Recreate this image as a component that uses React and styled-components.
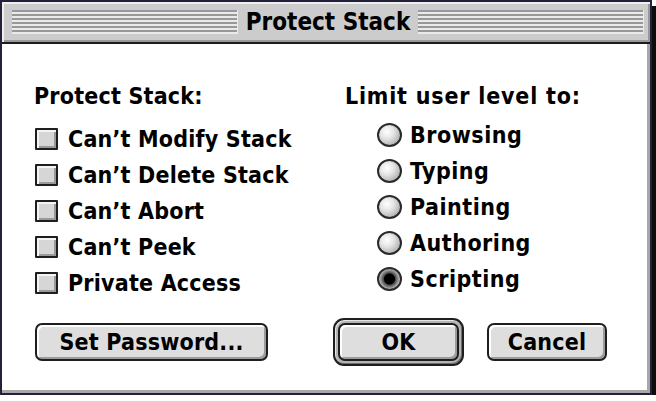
import React from 'react';
import styled, { createGlobalStyle } from 'styled-components';

const GlobalStyle = createGlobalStyle`
  html, body {
    margin: 0;
    padding: 0;
    background: #ffffff;
  }
  body {
    font-family: "DejaVu Sans Condensed", "Liberation Sans", sans-serif;
    font-weight: bold;
    color: #000;
  }
`;

const Window = styled.div`
  width: 648px;
  height: 391px;
  border: 2px solid #23213a;
  box-shadow: 4px 6px 0 #0d0d0d;
  display: flex;
  flex-direction: column;
  background: #fff;
`;

const TitleBar = styled.div`
  height: 40px;
  flex: none;
  display: flex;
  align-items: center;
  padding: 0 6px 0 10px;
  background: #cccccc;
  border-bottom: 2px solid #1c1c1c;
  box-shadow: inset 2px 2px 0 #eeeeee, inset -2px -2px 0 #999999;
`;

const Stripes = styled.div`
  flex: 1;
  height: 24px;
  background: repeating-linear-gradient(
    to bottom,
    #989898 0,
    #989898 2px,
    #eaeaea 2px,
    #eaeaea 4px
  );
  box-shadow: inset -1px 0 0 #eaeaea;
`;

const Title = styled.div`
  padding: 0 8px;
  font-size: 24px;
  line-height: 40px;
`;

const Content = styled.div`
  flex: 1;
  display: flex;
  flex-direction: column;
  padding: 34px 0 0 32px;
  border-right: 3px solid #a8a8a8;
  border-bottom: 3px solid #a8a8a8;
`;

const Columns = styled.div`
  display: flex;
`;

const Column = styled.div`
  width: ${(p) => p.$width}px;
  display: flex;
  flex-direction: column;
`;

const Heading = styled.div`
  font-size: 23px;
  line-height: 36px;
  height: 36px;
  letter-spacing: ${(p) => p.$spacing}px;
  margin-bottom: ${(p) => p.$gap}px;
`;

const List = styled.div`
  display: flex;
  flex-direction: column;
  padding-left: ${(p) => p.$indent}px;
`;

const Row = styled.label`
  display: flex;
  align-items: center;
  height: 36px;
  font-size: 23px;
  letter-spacing: ${(p) => p.$spacing}px;
  gap: ${(p) => p.$gap}px;
`;

const CheckBox = styled.span`
  width: 19px;
  height: 18px;
  flex: none;
  border: 2px solid #1e1e1e;
  border-radius: 1px;
  background: #d6d6d6;
  box-shadow: inset 2px 2px 0 #f4f4f4, inset -2px -2px 0 #9a9a9a;
`;

const Radio = styled.span`
  width: 21px;
  height: 20px;
  flex: none;
  border: 2px solid #2a2a2a;
  border-radius: 50%;
  background: ${(p) =>
    p.$on
      ? 'radial-gradient(circle at 50% 50%, #000 0, #000 5px, #4a4a4a 6px, #9c9c9c 9px, #cfcfcf 11px)'
      : 'radial-gradient(circle at 38% 35%, #ffffff 0, #e6e6e6 35%, #b4b4b4 75%, #8e8e8e 100%)'};
`;

const ButtonRow = styled.div`
  display: flex;
  align-items: center;
  margin-top: 17px;
  padding-left: 1px;
`;

const Button = styled.button`
  width: ${(p) => p.$width}px;
  height: 38px;
  margin-left: ${(p) => p.$left || 0}px;
  padding: 0;
  font-family: inherit;
  font-weight: bold;
  font-size: 23px;
  letter-spacing: 0.2px;
  color: #000;
  background: #dedede;
  border: 2px solid #1e1e1e;
  border-radius: 7px;
  box-shadow: inset 2px 2px 0 #ffffff, inset -2px -2px 0 #9c9c9c;
  cursor: pointer;
`;

const DefaultRing = styled.div`
  margin-left: ${(p) => p.$left}px;
  padding: 3px;
  border: 2px solid #1e1e1e;
  border-radius: 11px;
  background: #b4b4b4;
  box-shadow: inset 1px 1px 0 #e6e6e6, inset -1px -1px 0 #6e6e6e;
  display: flex;
`;

const protections = [
  "Can't Modify Stack",
  "Can't Delete Stack",
  "Can't Abort",
  "Can't Peek",
  'Private Access',
];

const levels = ['Browsing', 'Typing', 'Painting', 'Authoring', 'Scripting'];

export default function App() {
  return (
    <>
      <GlobalStyle />
      <Window>
        <TitleBar>
          <Stripes />
          <Title>Protect Stack</Title>
          <Stripes />
        </TitleBar>
        <Content>
          <Columns>
            <Column $width={311}>
              <Heading $gap={7} $spacing={0.2}>
                Protect Stack:
              </Heading>
              <List $indent={1}>
                {protections.map((p) => (
                  <Row key={p} $gap={10} $spacing={0.2}>
                    <CheckBox />
                    {p.replace("'", '\u2019')}
                  </Row>
                ))}
              </List>
            </Column>
            <Column $width={300}>
              <Heading $gap={3} $spacing={0.8}>
                Limit user level to:
              </Heading>
              <List $indent={32}>
                {levels.map((l) => (
                  <Row key={l} $gap={8} $spacing={0.5}>
                    <Radio $on={l === 'Scripting'} />
                    {l}
                  </Row>
                ))}
              </List>
            </Column>
          </Columns>
          <ButtonRow>
            <Button $width={233}>Set Password...</Button>
            <DefaultRing $left={65}>
              <Button $width={121}>OK</Button>
            </DefaultRing>
            <Button $width={120} $left={23}>
              Cancel
            </Button>
          </ButtonRow>
        </Content>
      </Window>
    </>
  );
}
